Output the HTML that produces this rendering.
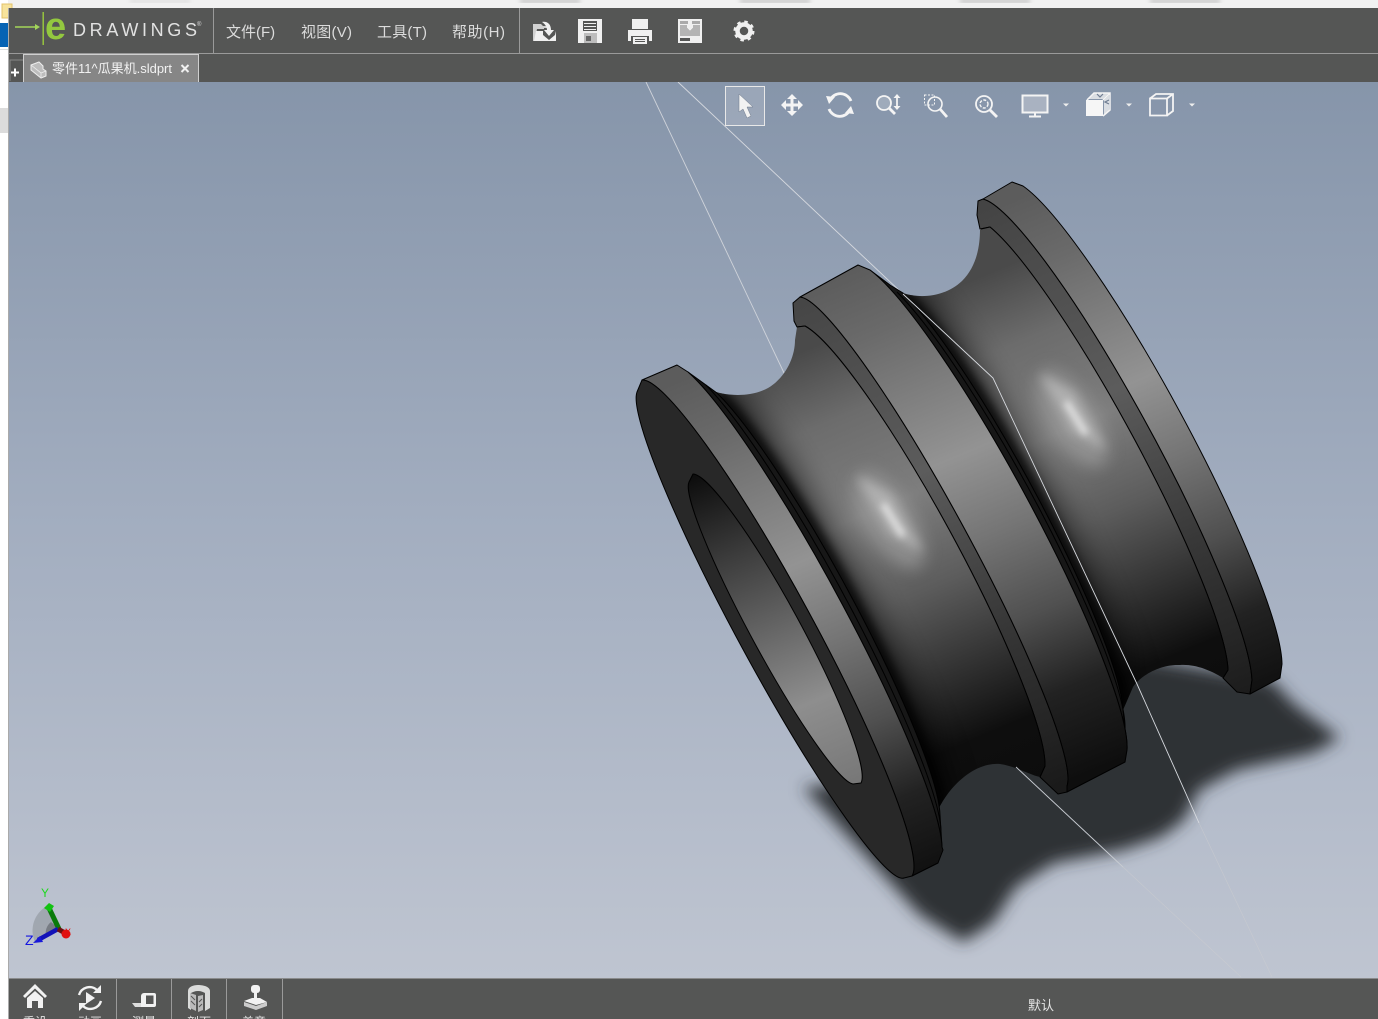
<!DOCTYPE html>
<html><head><meta charset="utf-8"><style>
html,body{margin:0;padding:0;background:#f2f2f2;width:1378px;height:1019px;overflow:hidden}
svg{display:block;position:absolute;left:0;top:0}
text{font-family:"Liberation Sans","Noto Sans CJK SC",sans-serif}
</style></head><body>
<svg width="1378" height="1019" viewBox="0 0 1378 1019" xmlns="http://www.w3.org/2000/svg">
<defs>
<linearGradient id="bg" x1="0" y1="82" x2="0" y2="978" gradientUnits="userSpaceOnUse"><stop offset="0" stop-color="#8695aa"/><stop offset=".5" stop-color="#a3aec0"/><stop offset="1" stop-color="#bfc5d1"/></linearGradient>
<linearGradient id="rim" gradientUnits="userSpaceOnUse" x1="0" y1="600" x2="225" y2="1136"><stop offset=".04" stop-color="#5c5c5c"/><stop offset=".16" stop-color="#6a6a6a"/><stop offset=".41" stop-color="#939393"/><stop offset=".555" stop-color="#757575"/><stop offset=".71" stop-color="#505050"/><stop offset=".85" stop-color="#222"/><stop offset="1" stop-color="#0e0e0e"/></linearGradient>
<linearGradient id="rimF" gradientUnits="userSpaceOnUse" x1="0" y1="640" x2="225" y2="1176"><stop offset=".04" stop-color="#5c5c5c"/><stop offset=".16" stop-color="#6a6a6a"/><stop offset=".41" stop-color="#939393"/><stop offset=".555" stop-color="#757575"/><stop offset=".71" stop-color="#505050"/><stop offset=".85" stop-color="#222"/><stop offset="1" stop-color="#0e0e0e"/></linearGradient>
<linearGradient id="step" gradientUnits="userSpaceOnUse" x1="0" y1="600" x2="225" y2="1136"><stop offset="0" stop-color="#424242"/><stop offset=".41" stop-color="#5c5c5c"/><stop offset=".7" stop-color="#383838"/><stop offset="1" stop-color="#1a1a1a"/></linearGradient>
<linearGradient id="gr" gradientUnits="userSpaceOnUse" x1="0" y1="600" x2="225" y2="1136"><stop offset=".14" stop-color="#4a4a4a"/><stop offset=".27" stop-color="#6c6c6c"/><stop offset=".44" stop-color="#7e7e7e"/><stop offset=".6" stop-color="#5c5c5c"/><stop offset=".76" stop-color="#2e2e2e"/><stop offset=".87" stop-color="#0e0e0e"/><stop offset="1" stop-color="#0c0c0c"/></linearGradient>
<linearGradient id="hole" gradientUnits="userSpaceOnUse" x1="0" y1="766" x2="152" y2="1128"><stop offset="0" stop-color="#0c0c0c"/><stop offset=".23" stop-color="#3c3c3c"/><stop offset=".65" stop-color="#8e8e8e"/><stop offset="1" stop-color="#6c6c6c"/></linearGradient>
<filter id="b1" x="-50%" y="-50%" width="200%" height="200%"><feGaussianBlur stdDeviation="3.500"/></filter>
<filter id="b2" x="-30%" y="-30%" width="160%" height="160%"><feGaussianBlur stdDeviation="2.500"/></filter>
<filter id="b4" x="-50%" y="-50%" width="200%" height="200%"><feGaussianBlur stdDeviation="5"/></filter>
<filter id="b5" x="-50%" y="-50%" width="200%" height="200%"><feGaussianBlur stdDeviation="8"/></filter>
<filter id="b9" x="-50%" y="-50%" width="200%" height="200%"><feGaussianBlur stdDeviation="14"/></filter>
<filter id="sh" x="-20%" y="-20%" width="140%" height="140%"><feGaussianBlur stdDeviation="8"/></filter>
<clipPath id="g1"><path d="M710,390 C725,396 750,398 768,388 C785,378 795,358 795,340 L797,327 L805,326 A258,38 61.5 0 1 1045,766 L1040,777 C1030,775 1015,766 1000,764 C975,762 950,785 938,810 L940,815 A255,36 61.5 0 0 717,393Z"/></clipPath>
<clipPath id="g2"><path d="M903,293 C920,299 945,297 962,281 C975,268 980,250 980,229 L990,227 A265,39 61.5 0 1 1228,670 L1223,678 C1210,670 1195,664 1180,665 C1160,664 1140,676 1133,687 L1123,710 A255,38 61.5 0 0 903,293Z"/></clipPath>
<clipPath id="vp"><rect x="9" y="82" width="1369" height="896"/></clipPath>
</defs>

<!-- window surroundings -->
<rect width="1378" height="8" fill="#f1f1f1"/>
<rect x="130" y="0" width="60" height="2" fill="#ccc" filter="url(#b2)"/>
<rect x="520" y="0" width="60" height="2" fill="#999" filter="url(#b2)"/>
<rect x="740" y="0" width="70" height="2" fill="#999" filter="url(#b2)"/>
<rect x="960" y="0" width="70" height="2" fill="#999" filter="url(#b2)"/>
<rect x="1150" y="0" width="70" height="2" fill="#999" filter="url(#b2)"/>
<rect x="0" y="0" width="8" height="1019" fill="#fff"/>
<rect x="0" y="23" width="8" height="24" fill="#0663b4"/>
<rect x="0" y="49" width="8" height="1" fill="#ddd"/>
<rect x="0" y="108" width="8" height="25" fill="#dcdcdc"/>
<rect x="2" y="4" width="10" height="14" fill="#f7e39c" stroke="#e3c36c"/>
<rect x="8" y="8" width="1370" height="1011" fill="#555655"/>
<rect x="8" y="8" width="1" height="1011" fill="#aaa"/>
<rect x="9" y="53" width="1369" height="1" fill="#9a9a9a"/>
<rect x="213" y="8" width="1" height="45" fill="#9a9a9a"/>
<rect x="519" y="8" width="1" height="45" fill="#9a9a9a"/>

<!-- logo -->
<path d="M15,27H38" stroke="#a3d65a" stroke-width="1.400"/><path d="M35,24l5,3l-5,3z" fill="#a3d65a"/>
<rect x="42.500" y="12" width="1.400" height="33" fill="#9ccc3d"/>
<text x="45" y="39" font-size="38" font-weight="bold" fill="#93c83f">e</text>
<text x="73" y="36" font-size="18" fill="#e2e2e2" textLength="124">DRAWINGS</text>
<text x="197" y="26" font-size="6" fill="#ddd">®</text>

<!-- menus -->
<g font-size="15" fill="#dcdcdc">
<text x="226" y="37">文件(F)</text>
<text x="301" y="37" textLength="51">视图(V)</text>
<text x="377" y="37" textLength="50">工具(T)</text>
<text x="452" y="37" textLength="53">帮助(H)</text>
</g>

<!-- top icons -->
<g fill="#f0f0f0">
<path d="M533,24h8l2,2h4v2l-3,0l0,1h-7l-2,12h-2z" opacity=".8"/>
<path d="M536,31h7v4l6,5 6,-5 1,-4l0,10h-22z"/>
<path d="M542,22c5,-1 9,2 9,8h3l-5,6-5,-6h3c0,-3-2,-6-5,-8z"/>
<path fill-rule="evenodd" d="M578,19h24v24h-24zM583,21v10h14v-10zM584,34v8h13v-8z"/>
<path d="M584,33h13v10h-13z" fill="#bdbdbd"/><path d="M586,36h5v5h-5z" fill="#666"/><path d="M584,23h12v1h-12zM584,26h12v1h-12zM584,29h12v1h-12z" fill="#f0f0f0"/>
<path fill-rule="evenodd" d="M632,19h16v10h-16zM628,30h24v11h-3v-5h-18v5h-3z"/>
<path d="M633,37h14v7h-14zM635,39v1h10v-1zM635,41v1h10v-1z" fill-rule="evenodd"/>
<path fill-rule="evenodd" d="M678,19h24v24h-24zM680,25v11h20v-11h-7l0,3-3,3-3,-3v-3zM680,38v3h10v-3z"/>
<path d="M680,21h8v3h-8zM692,21h8v3h-8z" fill="#aaa"/>
<path d="M680,25h7v3l3,3 3,-3v-3h7v11h-20z" fill="#b4b4b4"/>
</g>
<circle cx="744" cy="31" r="6.500" fill="none" stroke="#f0f0f0" stroke-width="4.500"/>
<circle cx="744" cy="31" r="9" fill="none" stroke="#f0f0f0" stroke-width="3" stroke-dasharray="3.400 3.670"/>

<!-- tabs -->
<path d="M10,81V60h13" fill="none" stroke="#888" stroke-width="1"/>
<path d="M11,72.500h8M15,68.500v8" stroke="#fff" stroke-width="2"/>
<rect x="23.500" y="54.500" width="175" height="28" fill="#868686" stroke="#cfcfcf"/>
<path d="M31,65l8,-3 4,4v3l3,2v5l-5,2-10,-8z" fill="#bdbdbd" stroke="#eee" stroke-width="1"/>
<path d="M31,65l10,8v4M41,73l5,-2" fill="none" stroke="#eee" stroke-width=".8"/>
<text x="52" y="73" font-size="13" fill="#f2f2f2" textLength="120" lengthAdjust="spacingAndGlyphs">零件11^瓜果机.sldprt</text>
<path d="M181.500,65l7,7M188.500,65l-7,7" stroke="#f0f0f0" stroke-width="2"/>

<!-- viewport -->
<rect x="9" y="82" width="1369" height="896" fill="url(#bg)"/>
<g clip-path="url(#vp)">
<path d="M646,82L785,375" stroke="#cfd3da" stroke-width=".9" fill="none"/>
<path d="M678,82L903,294" stroke="#d6d9df" stroke-width=".9" fill="none"/>
<path d="M1241,977L1123,867M1272,977L1199,823" stroke="#cfcfd0" stroke-width=".6" fill="none" opacity=".6"/>

<path d="M803,787 L870,860 L920,915 L963,942 L993,923 L1016,887 L1054,863 L1123,850 L1161,837 L1184,820 L1199,790 L1237,770 L1313,753 L1340,738 L1294,704 L1272,680 L1100,650 L900,780Z" fill="#2e3035" filter="url(#sh)"/>

<g stroke="#000" stroke-width="1" stroke-linejoin="round">
<!-- back flange -->
<path d="M978,201 L983,199 A283,42 61.5 0 1 1252,680 L1250,694 L1237,692 L1223,678 L1228,670 A265,39 61.5 0 0 990,227 L980,229 L977,215Z" fill="url(#step)"/>
<path d="M983,199 L1012,182 L1023,186 A283,42 61.5 0 1 1282,664 L1280,678 L1250,694 L1252,680 A283,42 61.5 0 0 983,199Z" fill="url(#rim)"/>

<!-- groove 2 -->
<path d="M903,293 C920,299 945,297 962,281 C975,268 980,250 980,229 L990,227 A265,39 61.5 0 1 1228,670 L1223,678 C1210,670 1195,664 1180,665 C1160,664 1140,676 1133,687 L1123,710 A255,38 61.5 0 0 903,293Z" fill="url(#gr)" stroke="none"/>
<g clip-path="url(#g2)" stroke="none">
<path d="M903,293 A255,38 61.5 0 1 1123,710" stroke="#000" stroke-width="12" fill="none" filter="url(#b4)" opacity=".9"/>
<path d="M903,293 A255,38 61.5 0 1 1123,710" stroke="#000" stroke-width="30" fill="none" filter="url(#b9)" opacity=".6"/>
<g>
<ellipse cx="1072" cy="418" rx="24" ry="56" fill="#a8a8a8" opacity=".55" transform="rotate(-32 1072 418)" filter="url(#b5)"/>
<path d="M1040,374L1074,392 1106,450 1072,432Z" fill="#b8b8b8" opacity=".8" filter="url(#b4)"/>
<path d="M1066,402L1086,434" stroke="#e2e2e2" stroke-width="6" filter="url(#b1)"/>
</g>
</g>
<path d="M981,229 L990,227 A265,39 61.5 0 1 1228,670 L1223,678" fill="none"/>

<!-- middle strip -->
<path d="M870,270 L890,285 L903,293 A255,38 61.5 0 1 1123,710 L1127,750 A283,42 61.5 0 0 870,270Z" fill="#171717"/>
<path d="M897,292 A265,40 61.5 0 1 1125,730" fill="none"/>
<!-- middle step -->
<path d="M793,303 L800,297 A280,37 61.5 0 1 1067,786 L1067,792 L1058,794 L1040,777 L1045,766 A258,38 61.5 0 0 805,326 L797,327 L794,321Z" fill="url(#step)"/>
<!-- middle rim -->
<path d="M800,297 L858,265 L870,270 A283,42 61.5 0 1 1127,750 L1125,762 L1067,792 L1067,786 A280,37 61.5 0 0 800,297Z" fill="url(#rim)"/>

<!-- groove 1 -->
<path d="M710,390 C725,396 750,398 768,388 C785,378 795,358 795,340 L797,327 L805,326 A258,38 61.5 0 1 1045,766 L1040,777 C1030,775 1015,766 1000,764 C975,762 950,785 938,810 L940,815 A255,36 61.5 0 0 717,393Z" fill="url(#gr)" stroke="none"/>
<g clip-path="url(#g1)" stroke="none">
<path d="M717,393 A255,36 61.5 0 1 940,815" stroke="#000" stroke-width="12" fill="none" filter="url(#b4)" opacity=".9"/>
<path d="M717,393 A255,36 61.5 0 1 940,815" stroke="#000" stroke-width="30" fill="none" filter="url(#b9)" opacity=".6"/>
<g transform="translate(-183 102)">
<ellipse cx="1072" cy="418" rx="24" ry="56" fill="#a8a8a8" opacity=".55" transform="rotate(-32 1072 418)" filter="url(#b5)"/>
<path d="M1040,374L1074,392 1106,450 1072,432Z" fill="#b8b8b8" opacity=".8" filter="url(#b4)"/>
<path d="M1066,402L1086,434" stroke="#e2e2e2" stroke-width="6" filter="url(#b1)"/>
</g>
</g>
<path d="M797,327 L805,326 A258,38 61.5 0 1 1045,766 L1040,777" fill="none"/>

<!-- front strip -->
<path d="M688,372 L717,393 A255,36 61.5 0 1 940,815 L942,847 A283,38 61.5 0 0 688,372Z" fill="#171717"/>
<path d="M706,385 A270,37 61.5 0 1 941,832" fill="none"/>
<!-- front rim -->
<path d="M642,380 L677,365 L688,372 A283,38 61.5 0 1 942,847 L943,850 L938,863 L912,876 A283,38 61.5 0 0 642,380Z" fill="url(#rimF)"/>
<!-- front face -->
<path d="M642,380 A283,38 61.5 0 1 912,876 L904,878 A278,33 61.5 0 1 637,392Z" fill="#282828"/>
<path d="M689,482 L693,474 A176.500,25 61.500 0 1 861,783 L853,784 A172.500,21 61.500 0 1 689,482Z" fill="url(#hole)"/>
</g>

<!-- wires on top -->
<path d="M903,294L993,378L1137,684L1199,823" stroke="#d8dbe0" stroke-width=".9" fill="none"/>
<path d="M1016,767L1123,867" stroke="#c8ccd2" stroke-width=".9" fill="none"/>
</g>

<!-- viewport toolbar -->
<rect x="725.500" y="86.500" width="39" height="39" fill="#ffffff" fill-opacity=".16" stroke="#e8e8e8"/>
<path d="M739,94L739,112 743,109 747,118 751,116 747,107 753,107Z" fill="#f2f2f2" stroke="#6f7a8c" stroke-width=".5"/>
<g fill="#f4f4f4">
<path d="M792,94l5,5h-3.500v4.500h4.500v-3.500l5,5-5,5v-3.500h-4.500v4.500h3.500l-5,5-5,-5h3.500v-4.500h-4.500v3.500l-5,-5 5,-5v3.500h4.500v-4.500h-3.500z"/>
<path d="M826,96l9,1-6,7zM854,114l-9,-1 6,-7z"/>
<path d="M893.500,98l3.500,-4 3.500,4zM893.500,106l3.500,4 3.500,-4z"/>
</g>
<g fill="none" stroke="#f4f4f4">
<path d="M830,100a11.500,11.500 0 0,1 21,1" stroke-width="2.800"/><path d="M850,110a11.500,11.500 0 0,1 -21,-1" stroke-width="2.800"/>
<circle cx="884" cy="103" r="7" stroke-width="1.800" fill="#aab3c2" fill-opacity=".7"/><path d="M889,108l6,6" stroke-width="2.800"/><path d="M897,96v12" stroke-width="1.800"/>
<rect x="924.500" y="95" width="10" height="10" stroke-width="1" stroke-dasharray="2 1.500"/><circle cx="935" cy="104" r="7" stroke-width="1.600"/><path d="M940,109l7,8" stroke-width="2.800"/>
<circle cx="984" cy="104" r="8" stroke-width="1.800"/><circle cx="984" cy="104" r="4" stroke-width="1.400" stroke-dasharray="3 1.500"/><path d="M990,110l7,7" stroke-width="2.800"/>
<rect x="1022.500" y="95.500" width="25" height="17" stroke-width="2" fill="#a9b2c1"/><path d="M1035,113v3M1029,116.500h12" stroke-width="2"/>
<path d="M1150,98.500h17v17h-17zM1150,98.500l6,-4.500h17v17l-6,4.500M1167,98.500l6,-4.500" stroke-width="1.800"/>
<path d="M1087,100l7,-7h16v17l-7,6M1103,100l7,-7" stroke-width="1.500"/>
</g>
<path d="M1086,100h17v16h-17z" fill="#f6f6f6"/>
<path d="M1087,99l7,-6h15l-6,6zM1104,100l5,-5v15l-5,5z" fill="#f6f6f6" fill-opacity=".75"/>
<path d="M1097,94l3,3 3,-3M1109,100l-4,2 4,2" fill="none" stroke="#6f7d92" stroke-width="1.200"/>
<g fill="#eee"><path d="M1063,103.500h6l-3,3zM1126,103.500h6l-3,3zM1189,103.500h6l-3,3z"/></g>

<!-- triad -->
<path d="M47,906L59,929L35,942A28,28 0 0,1 47,906Z" fill="#9aa0a8" opacity=".8"/>
<path d="M51,922L59,929 46,936A14,14 0 0,1 51,922Z" fill="#777c84"/>
<path d="M49,908L59,929" stroke="#0a7a0a" stroke-width="5"/><path d="M49,903l-5,5 6,4 4,-6z" fill="#12c212"/>
<path d="M58,929L38,940" stroke="#1212b8" stroke-width="4.500"/><path d="M33,943l7,-7 3,6z" fill="#1818d8"/>
<path d="M58,929L65,933" stroke="#701010" stroke-width="5"/><circle cx="66" cy="934" r="4.500" fill="#e01010"/>
<text x="41" y="897" font-size="12" fill="#1ed81e">Y</text>
<text x="25" y="945" font-size="14" fill="#1414e0">Z</text>
<text x="65" y="935" font-size="9" fill="#e01010">X</text>

<!-- bottom bar -->
<rect x="9" y="978" width="1369" height="41" fill="#555655"/>
<rect x="9" y="978" width="1369" height="1" fill="#8a8b8c"/>
<g fill="#9a9a9a"><rect x="116" y="979" width="1" height="40"/><rect x="171" y="979" width="1" height="40"/><rect x="226" y="979" width="1" height="40"/><rect x="282" y="979" width="1" height="40"/></g>
<g fill="#f2f2f2">
<path d="M35,984l12,12-2,2-10,-9.500-10,9.500-2,-2z"/><path d="M35,991l8,7v10h-5v-7h-6v7h-5v-10z"/>
<path d="M86,992l9,6-9,6z"/>
<path d="M198,985c6,0 12,2 12,6v17l-5,3v-18c-2,-1-4,-2-7,-2s-5,1-7,2l0,17-3,-2v-17c0,-4 5,-6 10,-6z" opacity=".85"/>
<path d="M190,993l6,2v16l-6,-3zM203,995v15l-5,2v-16z" fill="#bbb"/>
<path d="M191,996l4,4M191,1001l4,4M199,1002l3,-3M199,1007l3,-3" stroke="#555" stroke-width="1" fill="none"/>
<rect x="251" y="985" width="9" height="8" rx="3"/><rect x="254" y="992" width="3" height="7"/>
<path d="M244,1001l8,-3h8l7,4-11,3z"/><path d="M244,1002l12,4 11,-4v4l-11,4-12,-4z" fill="#ccc"/>
<path fill-rule="evenodd" d="M141,996a3,3 0 0,1 3,-3h10a2,2 0 0,1 2,2v10a2,2 0 0,1 -2,2h-13zM146,995.500v8.500h7.500v-8.500z"/>
<path d="M132,1003h9v4h-6z" fill="#ddd"/>
</g>
<g fill="none" stroke="#f2f2f2" stroke-width="2.400">
<path d="M79,995a11,11 0 0,1 18,-5"/><path d="M101,1001a11,11 0 0,1-18,5"/>
</g>
<g fill="#f2f2f2"><path d="M101,985v8h-8zM79,1011v-8h8z"/></g>
<g font-size="12" fill="#e6e6e6">
<text x="23" y="1026">重设</text><text x="78" y="1026">动画</text><text x="132" y="1026">测量</text><text x="187" y="1026">剖面</text><text x="242" y="1026">盖章</text>
</g>
<text x="1028" y="1010" font-size="13" fill="#e6e6e6">默认</text>
</svg>
</body></html>
